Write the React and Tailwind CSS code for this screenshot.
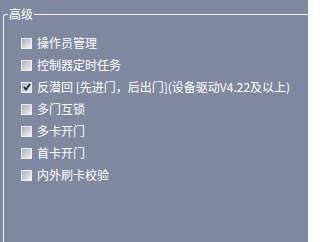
const options = [
  { label: '操作员管理', checked: false },
  { label: '控制器定时任务', checked: false },
  { label: '反潜回 [先进门，后出门](设备驱动V4.22及以上)', checked: true },
  { label: '多门互锁', checked: false },
  { label: '多卡开门', checked: false },
  { label: '首卡开门', checked: false },
  { label: '内外刷卡校验', checked: false },
];

const CheckBox = ({ checked }) => (
  <span className="w-[11px] h-[11px] shrink-0 border border-[#eeeeee] bg-linear-to-br from-[#a9adbb] to-[#f2f2f2] flex items-center justify-center">
    {checked && (
      <svg width="8" height="8" viewBox="0 0 8 8">
        <polyline points="1,4 3,6.5 7,1" fill="none" stroke="#1c2060" strokeWidth="1.8" />
      </svg>
    )}
  </span>
);

const App = () => {
  return (
    <div
      className="w-[308px] h-[242px] bg-[#8088a0] overflow-hidden text-white text-[12px]"
      style={{ fontFamily: '"Noto Sans CJK SC", "Noto Sans", sans-serif' }}
    >
      <fieldset className="ml-[3px] mt-[7px] h-[235px] border-t border-l border-r-0 border-b-0 border-[#f4f4f8] rounded-tl-[3px]">
        <legend className="ml-[4px] px-[1px] leading-[14px]">高级</legend>
        <ul className="pt-[11px] pl-[17px]">
          {options.map((opt, index) => (
            <li key={index} className="h-[22px] flex items-center gap-[5px] whitespace-nowrap">
              <CheckBox checked={opt.checked} />
              <span className="leading-[14px]">{opt.label}</span>
            </li>
          ))}
        </ul>
      </fieldset>
    </div>
  );
};

export default App;
